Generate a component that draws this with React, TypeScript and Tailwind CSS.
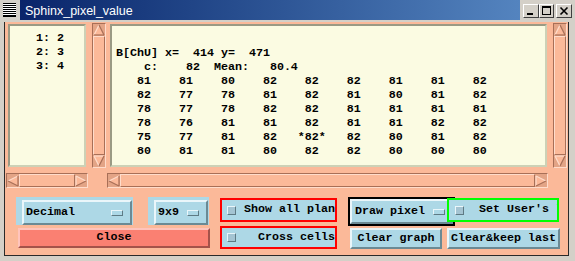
import React from "react";

const MONO = '"Liberation Mono", "DejaVu Sans Mono", monospace';
const SANS = '"Liberation Sans", Arial, sans-serif';

const PEACH = "#fbb999";
const LIGHT = "#ffdccb";
const DARK = "#a86f57";

function Arrow({ dir }: { dir: "up" | "down" | "left" | "right" }) {
  let fill = "";
  let lights: [number, number, number, number][] = [];
  let darks: [number, number, number, number][] = [];
  if (dir === "up") {
    fill = "6,1 1,11 11,11";
    lights = [[1, 11, 6, 1]];
    darks = [[6, 1, 11, 11], [1, 11, 11, 11]];
  } else if (dir === "down") {
    fill = "1,1 11,1 6,11";
    lights = [[1, 1, 11, 1], [1, 1, 6, 11]];
    darks = [[11, 1, 6, 11]];
  } else if (dir === "left") {
    fill = "1,6 11,1 11,11";
    lights = [[1, 6, 11, 1]];
    darks = [[1, 6, 11, 11], [11, 1, 11, 11]];
  } else {
    fill = "1,1 1,11 11,6";
    lights = [[1, 1, 1, 11], [1, 1, 11, 6]];
    darks = [[1, 11, 11, 6]];
  }
  return (
    <svg width="12" height="12" viewBox="0 0 12 12" className="shrink-0">
      <polygon points={fill} fill={PEACH} />
      {lights.map((l, i) => (
        <line key={"l" + i} x1={l[0]} y1={l[1]} x2={l[2]} y2={l[3]} stroke={LIGHT} strokeWidth="1.2" />
      ))}
      {darks.map((l, i) => (
        <line key={"d" + i} x1={l[0]} y1={l[1]} x2={l[2]} y2={l[3]} stroke={DARK} strokeWidth="1.2" />
      ))}
    </svg>
  );
}

function VScroll() {
  return (
    <div className="flex flex-col w-[14px] h-[145px] shrink-0 bg-[#e3a486] border border-t-[#a86f57] border-l-[#a86f57] border-b-[#ffdccb] border-r-[#ffdccb]">
      <Arrow dir="up" />
      <div className="flex-1 bg-[#fbb999] border border-t-[#ffdccb] border-l-[#ffdccb] border-b-[#a86f57] border-r-[#a86f57]" />
      <Arrow dir="down" />
    </div>
  );
}

function HScroll({ w }: { w: string }) {
  return (
    <div className={"flex flex-row items-stretch h-[15px] shrink-0 bg-[#e3a486] border border-t-[#a86f57] border-l-[#a86f57] border-b-[#ffdccb] border-r-[#ffdccb] " + w}>
      <div className="flex items-center">
        <Arrow dir="left" />
      </div>
      <div className="flex-1 bg-[#fbb999] border border-t-[#ffdccb] border-l-[#ffdccb] border-b-[#a86f57] border-r-[#a86f57]" />
      <div className="flex items-center">
        <Arrow dir="right" />
      </div>
    </div>
  );
}

const raisedBlue =
  "bg-[#add8e6] border-2 border-t-[#eaf6fa] border-l-[#eaf6fa] border-b-[#6b8a94] border-r-[#6b8a94]";

function Indicator() {
  return (
    <span className="block w-[12px] h-[6px] bg-[#add8e6] border border-t-[#eaf6fa] border-l-[#eaf6fa] border-b-[#5e7a84] border-r-[#5e7a84] shrink-0" />
  );
}

function CheckBox() {
  return (
    <span className="block w-[9px] h-[9px] bg-[#a4c4d2] border border-t-[#eaf6fa] border-l-[#eaf6fa] border-b-[#5e7a84] border-r-[#5e7a84] shrink-0" />
  );
}

const rows = [
  "   81    81    80    82    82    82    81    81    82",
  "   82    77    78    81    82    81    80    81    82",
  "   78    77    78    82    82    81    81    81    81",
  "   78    76    81    81    82    81    81    82    82",
  "   75    77    81    82   *82*   82    80    81    82",
  "   80    81    81    80    82    82    80    80    80",
];

const mainText = ["", "B[ChU] x=  414 y=  471", "    c:    82  Mean:   80.4", ...rows].join("\n");
const listText = ["   1: 2", "   2: 3", "   3: 4"].join("\n");

export default function App() {
  return (
    <div className="w-[575px] h-[261px] bg-[#d4d0c8] flex flex-col overflow-hidden">
      {/* Title bar */}
      <div className="flex h-[20px] shrink-0">
        <div className="w-[20px] h-[20px] bg-[#d4d0c8] shrink-0">
          <svg width="20" height="20" viewBox="0 0 20 20">
            <rect x="3" y="3" width="13" height="14" fill="#ffffff" />
            {[3, 5, 7, 9, 11, 13, 15].map((y) => (
              <rect key={y} x="3" y={y} width="13" height="1" fill="#000000" />
            ))}
            <rect x="3" y="16" width="13" height="1" fill="#000000" />
          </svg>
        </div>
        <div
          className="w-[500px] h-[20px] bg-linear-to-r from-[#0a246a] to-[#5484bf] text-white pl-[5px] pt-[3px] text-[12.5px] leading-[17px] whitespace-nowrap overflow-hidden"
          style={{ fontFamily: SANS }}
        >
          Sphinx_pixel_value
        </div>
        <div className="flex-1 bg-[#d4d0c8] flex items-start pt-[4px]">
          <div className="ml-[3px] w-[16px] h-[14px] bg-[#d4d0c8] border border-t-white border-l-white border-b-[#404040] border-r-[#404040]">
            <svg width="14" height="12" viewBox="0 0 14 12">
              <rect x="3" y="8" width="6" height="2" fill="#000" />
            </svg>
          </div>
          <div className="ml-[0px] w-[15px] h-[14px] bg-[#d4d0c8] border border-t-white border-l-white border-b-[#404040] border-r-[#404040]">
            <svg width="13" height="12" viewBox="0 0 13 12">
              <rect x="2.5" y="1.5" width="8" height="8" fill="none" stroke="#000" strokeWidth="1" />
              <rect x="2" y="1" width="9" height="2" fill="#000" />
            </svg>
          </div>
          <div className="ml-[2px] w-[16px] h-[14px] bg-[#d4d0c8] border border-t-white border-l-white border-b-[#404040] border-r-[#404040]">
            <svg width="14" height="12" viewBox="0 0 14 12">
              <path d="M3.5 2.5 L10.5 9.5 M10.5 2.5 L3.5 9.5" stroke="#000" strokeWidth="1.6" />
            </svg>
          </div>
        </div>
      </div>
      <div className="h-[2px] shrink-0 bg-[#d4d0c8]" />

      {/* Window body */}
      <div
        className="ml-[4px] w-[565px] h-[234px] shrink-0 border-l border-r border-b border-[#2a2a2a] bg-[#fbb999] flex flex-col text-black font-bold text-[11.67px]"
        style={{ fontFamily: MONO }}
      >
        {/* panels */}
        <div className="flex items-start mt-[1px] h-[145px]">
          <div className="ml-[3px] mt-[1px] w-[78px] h-[143px] shrink-0 bg-[#fbfbe2] border-2 border-t-[#9a9a84] border-l-[#9a9a84] border-b-[#cdd1b6] border-r-[#cdd1b6] pl-[5px] pt-[5px] whitespace-pre leading-[14px] overflow-hidden">
            {listText}
          </div>
          <div className="ml-[6px]">
            <VScroll />
          </div>
          <div className="ml-[4px] mt-[1px] w-[437px] h-[143px] shrink-0 bg-[#fbfbe2] border-2 border-t-[#9a9a84] border-l-[#9a9a84] border-b-[#cdd1b6] border-r-[#cdd1b6] pl-[4px] pt-[6px] whitespace-pre leading-[14px] overflow-hidden">
            {mainText}
          </div>
          <div className="ml-[6px]">
            <VScroll />
          </div>
        </div>

        {/* horizontal scrollbars */}
        <div className="flex mt-[5px] h-[15px]">
          <div className="ml-[1px]">
            <HScroll w="w-[82px]" />
          </div>
          <div className="ml-[19px]">
            <HScroll w="w-[441px]" />
          </div>
        </div>

        {/* controls row A */}
        <div className="flex items-start h-[29px] mt-[9px]">
          <div className="ml-[11px] w-[117px] h-[28px] shrink-0 bg-[#add8e6] pl-[6px] pt-[3px]">
            <div className={raisedBlue + " w-[110px] h-[25px] flex items-center pl-[2px] pr-[7px]"}>
              <span>Decimal</span>
              <span className="ml-auto">
                <Indicator />
              </span>
            </div>
          </div>
          <div className="ml-[15px] w-[61px] h-[28px] shrink-0 bg-[#add8e6] pl-[6px] pt-[3px]">
            <div className={raisedBlue + " w-[54px] h-[25px] flex items-center pl-[2px] pr-[7px]"}>
              <span>9x9</span>
              <span className="ml-auto">
                <Indicator />
              </span>
            </div>
          </div>
          <div className="ml-[11px] mt-[1px] w-[117px] h-[24px] shrink-0 border-2 border-[#ff0000] bg-[#add8e6] flex items-center pl-[5px] overflow-hidden whitespace-pre">
            <CheckBox />
            <span className="ml-[8px]">Show all plan</span>
          </div>
          <div className="ml-[11px] w-[107px] h-[29px] shrink-0 border-2 border-black">
            <div className={raisedBlue + " w-full h-full flex items-center pl-[3px] pr-[6px] whitespace-pre"}>
              <span>Draw pixel</span>
              <span className="ml-auto">
                <Indicator />
              </span>
            </div>
          </div>
          <div className="ml-[-8px] mt-[1px] w-[112px] h-[24px] shrink-0 relative z-10 border-2 border-[#00ff00] bg-[#add8e6] flex items-center pl-[6px] overflow-hidden whitespace-pre">
            <CheckBox />
            <span className="ml-[15px]">Set User's limits</span>
          </div>
        </div>

        {/* controls row B */}
        <div className="flex items-start h-[23px]">
          <div className="ml-[13px] mt-[2px] w-[192px] h-[20px] shrink-0 bg-[#fa8072] border-2 border-t-[#ffc4bc] border-l-[#ffc4bc] border-b-[#a4524a] border-r-[#a4524a] flex items-center justify-center">
            Close
          </div>
          <div className="ml-[10px] w-[117px] h-[23px] shrink-0 border-2 border-[#ff0000] bg-[#add8e6] flex items-center pl-[5px] overflow-hidden whitespace-pre">
            <CheckBox />
            <span className="ml-[22px]">Cross cells</span>
          </div>
          <div className={raisedBlue + " ml-[13px] mt-[2px] w-[92px] h-[21px] shrink-0 flex items-center justify-center whitespace-pre"}>
            Clear graph
          </div>
          <div className={raisedBlue + " ml-[5px] mt-[2px] w-[113px] h-[21px] shrink-0 flex items-center justify-center whitespace-pre"}>
            Clear&amp;keep last
          </div>
        </div>
      </div>
    </div>
  );
}
